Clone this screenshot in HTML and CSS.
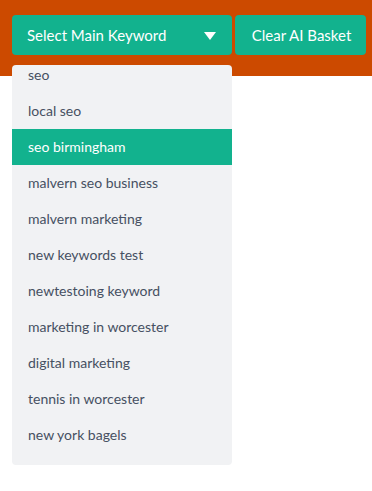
FILE: index.html
```html
<!DOCTYPE html>
<html>
	<head>
		<title>Keyword Picker</title>
		<link rel="stylesheet" href="styles.css">
	</head>
	<body>
		<div class="page">
			<div class="topbar">
				<button class="btn select-btn">
					<span>Select Main Keyword</span>
					<svg class="caret" width="12" height="8" viewBox="0 0 12 8"><path d="M0 0 L12 0 L6 8 Z" fill="#ffffff"/></svg>
				</button>
				<button class="btn clear-btn">Clear AI Basket</button>
			</div>
			<div class="menu">
				<ul class="menu-list">
					<li>seo</li>
					<li>local seo</li>
					<li class="active">seo birmingham</li>
					<li>malvern seo business</li>
					<li>malvern marketing</li>
					<li>new keywords test</li>
					<li>newtestoing keyword</li>
					<li>marketing in worcester</li>
					<li>digital marketing</li>
					<li>tennis in worcester</li>
					<li>new york bagels</li>
				</ul>
			</div>
		</div>
	</body>
</html>
```

FILE: styles.css
```css
body {
	margin: 0;
	background: #ffffff;
	font-family: Lato, "Open Sans", sans-serif;
}

.page {
	height: 491px;
	padding: 15px 0 0 12px;
	box-sizing: border-box;
	background: linear-gradient(#cc4a00 0, #cc4a00 76px, #ffffff 76px);
}

.topbar {
	display: flex;
	gap: 3px;
}

.btn {
	flex-shrink: 0;
	height: 40px;
	border: none;
	border-radius: 4px;
	background: #12b28e;
	color: #ffffff;
	font-family: Lato, "Open Sans", sans-serif;
	font-size: 15px;
}

.select-btn {
	display: flex;
	align-items: center;
	justify-content: space-between;
	width: 220px;
	padding: 0 16px 0 15px;
}

.caret {
	margin-top: 1px;
}

.clear-btn {
	width: 131px;
	padding: 0 0 0 2px;
}

.menu {
	width: 220px;
	height: 400px;
	margin-top: 10px;
	overflow: hidden;
	background: #f1f2f4;
	border-radius: 4px;
}

.menu-list {
	list-style: none;
	margin: -8px 0 0 0;
	padding: 0;
}

.menu-list li {
	height: 36px;
	line-height: 36px;
	padding-left: 16px;
	font-size: 14px;
	color: #465062;
}

.menu-list li.active {
	background: #12b28e;
	color: #ffffff;
}
```
